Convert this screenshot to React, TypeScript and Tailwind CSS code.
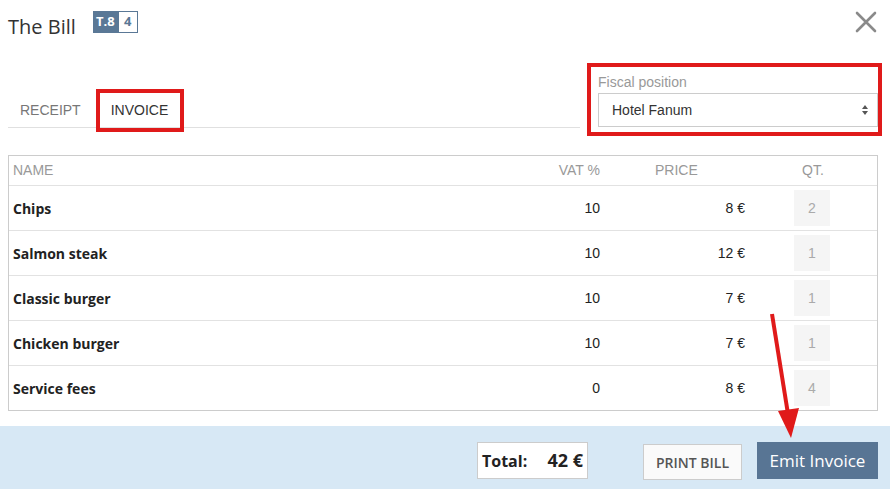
import React from 'react';

const items = [
  { name: 'Chips', vat: '10', price: '8 €', qty: '2' },
  { name: 'Salmon steak', vat: '10', price: '12 €', qty: '1' },
  { name: 'Classic burger', vat: '10', price: '7 €', qty: '1' },
  { name: 'Chicken burger', vat: '10', price: '7 €', qty: '1' },
  { name: 'Service fees', vat: '0', price: '8 €', qty: '4' },
];

const open = { fontFamily: '"Open Sans", "Liberation Sans", sans-serif' };
const arial = { fontFamily: '"Liberation Sans", Arial, sans-serif' };

export default function App() {
  return (
    <div className="relative h-[489px] w-[890px] overflow-hidden bg-white text-[#333]" style={arial}>
      {/* header */}
      <div className="flex h-[52px] items-center pl-2 pr-3">
        <h1 className="translate-y-[1px] text-[20px] leading-none text-[#333]" style={open}>
          The Bill
        </h1>
        <div className="ml-[17px] flex h-[22px] -translate-y-[4px] items-stretch text-[13px] font-bold" style={open}>
          <span className="flex w-[25px] items-center justify-center bg-[#5a7896] text-white">T.8</span>
          <span className="flex w-[20px] items-center justify-center border border-[#5a7896] bg-white text-[#5a7896]">4</span>
        </div>
        <button className="ml-auto flex h-[24px] w-[24px] -translate-y-[4px] items-center justify-center">
          <svg width="22" height="22" viewBox="0 0 22 22">
            <path d="M2 2 L20 20 M20 2 L2 20" stroke="#8a8a8a" strokeWidth="2.6" strokeLinecap="round" />
          </svg>
        </button>
      </div>

      {/* tabs + fiscal position */}
      <div className="flex h-[103px] pl-2 pr-3">
        <div className="w-[572px] pt-[38px]">
          <div className="flex h-[38px] w-full items-center gap-[30px] border-b border-[#e0e0e0] pl-3 pt-[4px] text-[14px]">
            <span className="text-[#777]">RECEIPT</span>
            <span className="text-[#333]">INVOICE</span>
          </div>
        </div>
        <div className="ml-[18px] flex flex-1 flex-col pt-[22px]">
          <span className="text-[14px] leading-[16px] text-[#999]">Fiscal position</span>
          <div className="mt-[3px] flex h-[34px] items-center justify-between border border-[#ccc] pl-[13px] pr-[8px] text-[14px] text-[#333]">
            <span>Hotel Fanum</span>
            <svg width="8" height="12" viewBox="0 0 8 12">
              <path d="M4 1 L7 5 L1 5 Z M4 11 L7 7 L1 7 Z" fill="#555" />
            </svg>
          </div>
        </div>
      </div>

      {/* table */}
      <div className="ml-2 w-[870px] border border-[#ccc]">
        <div className="grid h-[30px] grid-cols-[511px_80px_145px_1fr] items-center border-b border-[#e2e2e2] text-[14px] text-[#999]">
          <span className="pl-[4px]">NAME</span>
          <span className="text-right">VAT %</span>
          <span className="pl-[55px]">PRICE</span>
          <span className="pl-[57px]">QT.</span>
        </div>
        {items.map((item, i) => (
          <div
            key={item.name}
            className={`grid grid-cols-[511px_80px_145px_1fr] items-center text-[14px] ${
              i < items.length - 1 ? 'h-[45px] border-b border-[#e2e2e2]' : 'h-[44px]'
            }`}
          >
            <span className="pl-[4px] font-bold text-[#222]" style={open}>
              {item.name}
            </span>
            <span className="text-right text-[#222]">{item.vat}</span>
            <span className="text-right text-[#222]">{item.price}</span>
            <span className="pl-[49px]">
              <span className="flex h-[36px] w-[36px] items-center justify-center bg-[#f5f5f5] text-[#aaa]">{item.qty}</span>
            </span>
          </div>
        ))}
      </div>

      {/* footer */}
      <div className="mt-[15px] flex h-[63px] items-start justify-end bg-[#d7e8f5] pr-3 pt-[16px]" style={open}>
        <div className="flex h-[37px] w-[111px] items-center border border-[#ccc] bg-white pl-[4px] text-[#222]">
          <span className="text-[16px] font-bold">Total:</span>
          <span className="ml-auto pr-[4px] text-[18px] font-bold">42 €</span>
        </div>
        <button className="ml-[55px] mt-[2px] h-[36px] w-[99px] border border-[#ccc] bg-[#fafafa] text-[14px] font-semibold text-[#555]">
          PRINT BILL
        </button>
        <button className="ml-[15px] h-[37px] w-[121px] bg-[#587594] text-[17px] text-white">Emit Invoice</button>
      </div>

      {/* annotations */}
      <div className="pointer-events-none absolute left-[96px] top-[89px] h-[43px] w-[88px] border-[4px] border-[#e01a1a]" />
      <div className="pointer-events-none absolute left-[587px] top-[63px] h-[73px] w-[295px] border-[4px] border-[#e01a1a]" />
      <svg className="pointer-events-none absolute left-0 top-0" width="890" height="489">
        <path d="M772 314 L788 414" stroke="#e01a1a" strokeWidth="4" />
        <path d="M778 411 L799 408 L791 438 Z" fill="#e01a1a" />
      </svg>
    </div>
  );
}
